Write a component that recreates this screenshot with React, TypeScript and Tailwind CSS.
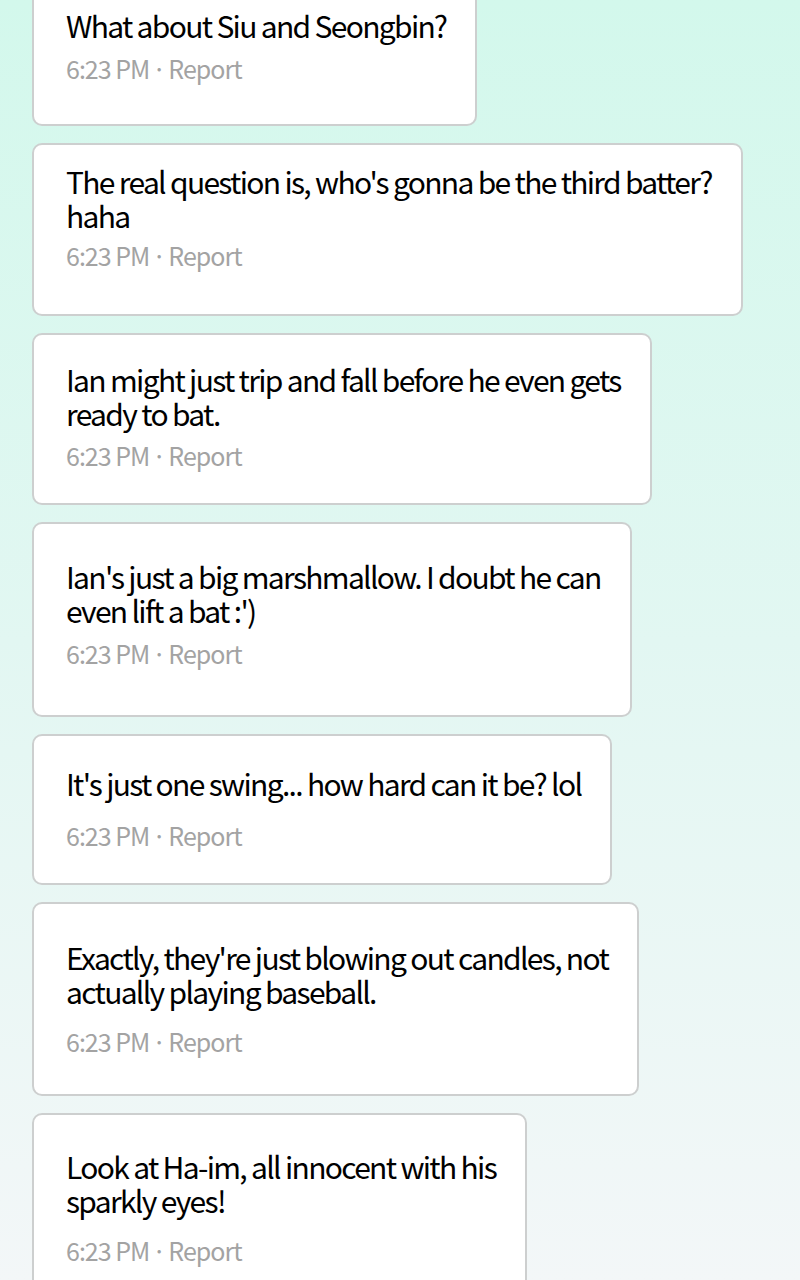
const messages = [
  { lines: ["What about Siu and Seongbin?"], box: "-mt-[25px] pt-[31px] pb-[41px]", gap: "mt-[11px]" },
  { lines: ["The real question is, who's gonna be the third batter?", "haha"], box: "pt-[19px] pb-[44px]", gap: "mt-[8px]" },
  { lines: ["Ian might just trip and fall before he even gets", "ready to bat."], box: "pt-[27px] pb-[33px]", gap: "mt-[10px]" },
  { lines: ["Ian's just a big marshmallow. I doubt he can", "even lift a bat :')"], box: "pt-[35px] pb-[47px]", gap: "mt-[11px]" },
  { lines: ["It's just one swing... how hard can it be? lol"], box: "pt-[30px] pb-[33px]", gap: "mt-[20px]" },
  { lines: ["Exactly, they're just blowing out candles, not", "actually playing baseball."], box: "pt-[36px] pb-[38px]", gap: "mt-[18px]" },
  { lines: ["Look at Ha-im, all innocent with his", "sparkly eyes!"], box: "pt-[34px] pb-[40px]", gap: "mt-[18px]" },
];

function Bubble({ lines, box, gap }: { lines: string[]; box: string; gap: string }) {
  return (
    <div className={`w-fit rounded-[10px] border-2 border-[#cdcfcf] bg-white pl-[32px] pr-[29px] ${box}`}>
      <p className="text-[30px] leading-[34px] tracking-[-0.056em] text-black whitespace-nowrap">
        {lines.map((l, i) => (
          <span key={i} className="block">
            {l}
          </span>
        ))}
      </p>
      <p className={`flex items-center text-[25px] leading-[30px] tracking-[-0.04em] text-[#a3a3a3] ${gap}`}>
        <span>6:23 PM</span>
        <span className="mx-[3px]">·</span>
        <span>Report</span>
      </p>
    </div>
  );
}

export default function App() {
  return (
    <div
      className="h-[1280px] w-[800px] overflow-hidden bg-gradient-to-b from-[#d3f8ec] via-[#e2f7f2] to-[#f3f7f8] pl-[32px]"
      style={{ fontFamily: '"Noto Sans CJK KR", "Noto Sans", sans-serif' }}
    >
      <div className="flex flex-col gap-[17px]">
        {messages.map((m, i) => (
          <Bubble key={i} {...m} />
        ))}
      </div>
    </div>
  );
}
